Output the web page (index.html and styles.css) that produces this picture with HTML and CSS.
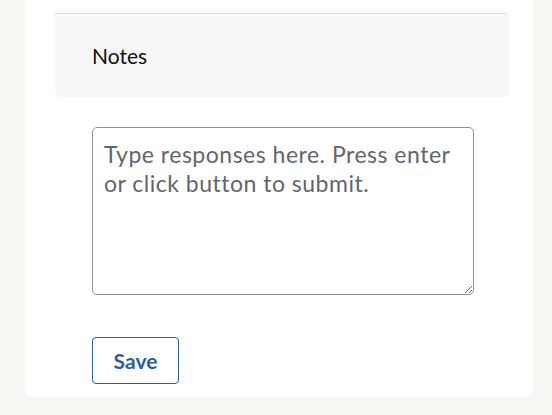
FILE: index.html
```html
<!DOCTYPE html>
<html lang="en">
<head>
<meta charset="utf-8">
<title>Notes</title>
<link rel="stylesheet" href="styles.css">
</head>
<body>
<div class="card">
  <div class="notes-head">
    <h2 class="notes-title">Notes</h2>
  </div>
  <form class="notes-form">
    <textarea class="notes-input" placeholder="Type responses here. Press enter or click button to submit."></textarea>
    <button type="button" class="save-btn">Save</button>
  </form>
</div>
</body>
</html>
```

FILE: styles.css
```css
html, body {
  margin: 0;
  padding: 0;
}
body {
  background: #f7f6f2;
  font-family: Lato, "Noto Sans", sans-serif;
  height: 415px;
  overflow: hidden;
}
.card {
  box-sizing: border-box;
  margin-left: 25px;
  width: 509px;
  height: 397px;
  background: #ffffff;
  border-radius: 0 0 8px 8px;
  padding: 13px 24px 13px 30px;
  display: flex;
  flex-direction: column;
}
.notes-head {
  background: #f7f7f7;
  border-top: 1px solid #dcdcdc;
  border-radius: 0 6px 6px 6px;
  height: 84px;
  display: flex;
  align-items: center;
  padding-left: 37px;
}
.notes-title {
  margin: 0;
  font-weight: 400;
  font-size: 21px;
  color: #111111;
}
.notes-form {
  display: flex;
  flex-direction: column;
  align-items: flex-start;
  padding-left: 37px;
  padding-top: 30px;
}
.notes-input {
  box-sizing: border-box;
  width: 382px;
  height: 168px;
  border: 1px solid #8d9096;
  border-radius: 5px;
  padding: 12px 11px;
  font-family: Lato, "Noto Sans", sans-serif;
  font-size: 23px;
  letter-spacing: 0.5px;
  line-height: 29px;
  color: #333;
  resize: vertical;
  margin: 0;
}
.notes-input::placeholder {
  color: #62666c;
}
.save-btn {
  margin-top: 42px;
  box-sizing: border-box;
  width: 87px;
  height: 47px;
  background: #ffffff;
  border: 1px solid #2c5e9b;
  border-radius: 4px;
  color: #2c5e9b;
  font-family: Lato, "Noto Sans", sans-serif;
  font-weight: 700;
  font-size: 21px;
  padding: 0;
}
```
